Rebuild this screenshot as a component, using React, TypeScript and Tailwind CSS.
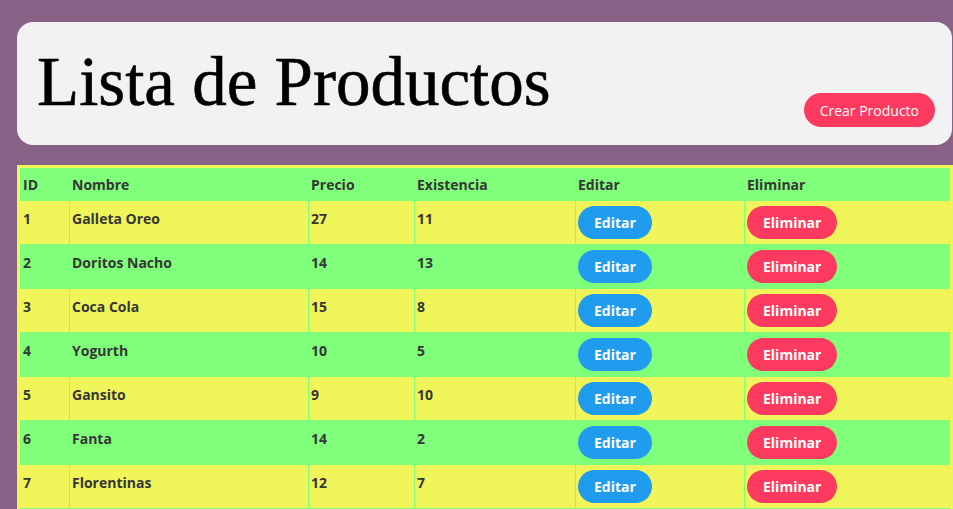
import React from "react";

const rows = [
  { id: 1, nombre: "Galleta Oreo", precio: 27, existencia: 11 },
  { id: 2, nombre: "Doritos Nacho", precio: 14, existencia: 13 },
  { id: 3, nombre: "Coca Cola", precio: 15, existencia: 8 },
  { id: 4, nombre: "Yogurth", precio: 10, existencia: 5 },
  { id: 5, nombre: "Gansito", precio: 9, existencia: 10 },
  { id: 6, nombre: "Fanta", precio: 14, existencia: 2 },
  { id: 7, nombre: "Florentinas", precio: 12, existencia: 7 },
];

const grid = "grid grid-cols-[49px_239px_106px_161px_169px_206px]";
const cell = "border-l border-[#80ff7a] pl-[2px]";

export default function App() {
  return (
    <div
      className="min-h-screen bg-[#876186] pt-[22px] pl-[17px] overflow-hidden"
      style={{ fontFamily: '"Open Sans", "Noto Sans", sans-serif' }}
    >
      <div className="w-[935px] h-[123px] bg-[#f2f2f2] rounded-2xl flex justify-between items-end pl-[20px] pr-[17px] pb-[18px]">
        <h1
          className="self-start pt-[26px] text-[69px] leading-none text-black [-webkit-text-stroke:0.6px_black]"
          style={{ fontFamily: '"Liberation Serif", serif' }}
        >
          Lista de Productos
        </h1>
        <button className="h-[34px] px-4 rounded-full bg-[#fc3a60] text-white text-[14px]">
          Crear Producto
        </button>
      </div>

      <div className="mt-[20px] w-[936px] bg-[#f0f55a] border-[3px] border-[#f0f55a] border-b-0 text-[#363636] text-[14px] font-bold leading-[20px]">
        <div className={`${grid} bg-[#80ff7a] h-[33px] items-center`}>
          <div className="pl-[3px]">ID</div>
          <div className="pl-[3px]">Nombre</div>
          <div className="pl-[3px]">Precio</div>
          <div className="pl-[3px]">Existencia</div>
          <div className="pl-[3px]">Editar</div>
          <div className="pl-[3px]">Eliminar</div>
        </div>
        {rows.map((r, i) => (
          <div
            key={r.id}
            className={`${grid} h-[44px] border-b border-[#80ff7a] ${
              i % 2 === 1 ? "bg-[#80ff7a]" : "bg-[#f0f55a]"
            }`}
          >
            <div className="pl-[3px] pt-[8px]">{r.id}</div>
            <div className={`${cell} pt-[8px]`}>{r.nombre}</div>
            <div className={`${cell} pt-[8px]`}>{r.precio}</div>
            <div className={`${cell} pt-[8px]`}>{r.existencia}</div>
            <div className={`${cell} pt-[5px]`}>
              <button className="h-[33px] px-4 rounded-full bg-[#209cee] text-white font-bold">
                Editar
              </button>
            </div>
            <div className={`${cell} pt-[5px]`}>
              <button className="h-[33px] px-4 rounded-full bg-[#fc3a60] text-white font-bold">
                Eliminar
              </button>
            </div>
          </div>
        ))}
      </div>
    </div>
  );
}
